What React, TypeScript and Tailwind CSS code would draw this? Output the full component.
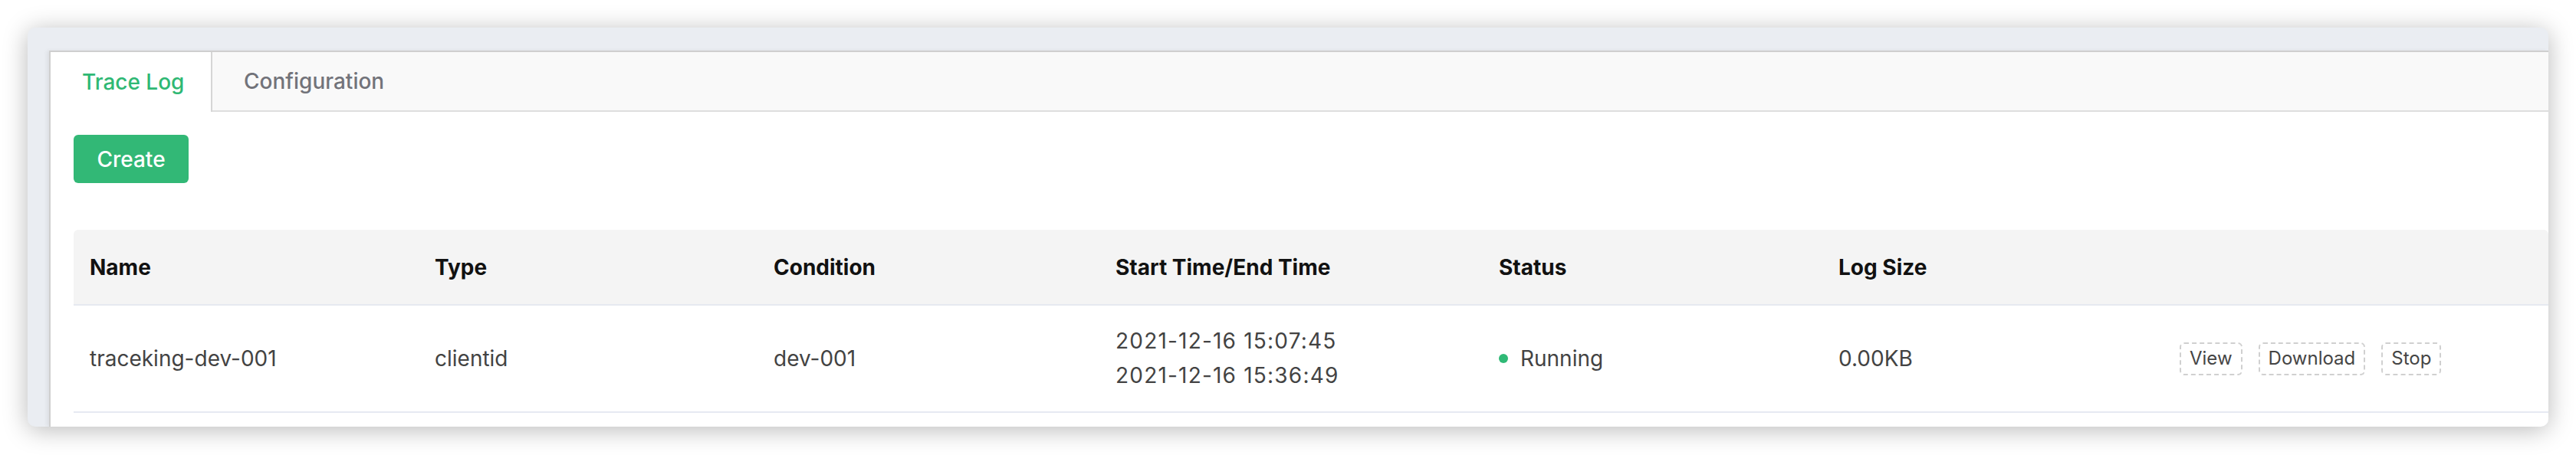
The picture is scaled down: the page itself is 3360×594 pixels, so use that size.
import React from 'react';

const columns = [
  { key: 'name', label: 'Name' },
  { key: 'type', label: 'Type' },
  { key: 'condition', label: 'Condition' },
  { key: 'time', label: 'Start Time/End Time' },
  { key: 'status', label: 'Status' },
  { key: 'size', label: 'Log Size' },
  { key: 'actions', label: '' },
];

const rows = [
  {
    name: 'traceking-dev-001',
    type: 'clientid',
    condition: 'dev-001',
    start: '2021-12-16 15:07:45',
    end: '2021-12-16 15:36:49',
    status: 'Running',
    size: '0.00KB',
  },
];

function ActionButton({ children }: { children: React.ReactNode }) {
  return (
    <button className="h-[43px] px-[11px] border-2 border-dashed border-[#d0d0d0] rounded-[6px] text-[24px] text-[#454545] leading-none bg-white">
      {children}
    </button>
  );
}

export default function App() {
  const gridCols = 'grid grid-cols-[450px_442px_446px_500px_443px_445px_1fr]';

  return (
    <div className="w-[3360px] h-[594px] bg-white pt-[36px] pl-[36px] overflow-hidden font-['Inter',sans-serif]">
      <div className="w-[3288px] h-[521px] bg-[#eaedf2] rounded-[10px] shadow-[0_4px_32px_rgba(0,0,0,0.28)] overflow-hidden pt-[30px] pl-[28px]">
        <div className="h-full bg-white border-l-2 border-t-2 border-[#cfcfcf] shadow-[-3px_0_5px_rgba(0,0,0,0.06)]">
          {/* tabs */}
          <div className="flex h-[78px] bg-[#f9f9f9] border-b-2 border-[#dedede]">
            <div className="w-[211px] h-[78px] bg-white border-r-2 border-[#d6d6d6] flex items-center pl-[41px] text-[28px] font-medium text-[#2fb874]">
              Trace Log
            </div>
            <div className="flex items-center pl-[41px] text-[28px] font-medium text-[#72737a]">
              Configuration
            </div>
          </div>

          <div className="pl-[30px] pt-[30px]">
            <button className="w-[150px] h-[63px] rounded-[6px] bg-[#32b876] text-white text-[28px] font-medium">
              Create
            </button>

            <div className="mt-[61px]">
              <div className={`${gridCols} h-[99px] bg-[#f4f4f4] rounded-t-[6px] border-b-2 border-[#e6e9f0] items-center`}>
                {columns.map((c) => (
                  <div key={c.key} className="pl-[21px] text-[28px] font-bold text-[#111111]">
                    {c.label}
                  </div>
                ))}
              </div>

              {rows.map((r) => (
                <div
                  key={r.name}
                  className={`${gridCols} h-[140px] border-b-2 border-[#e6e9f2] items-center text-[28px] text-[#434343]`}
                >
                  <div className="pl-[21px]">{r.name}</div>
                  <div className="pl-[21px]">{r.type}</div>
                  <div className="pl-[21px]">{r.condition}</div>
                  <div className="pl-[21px] leading-[45px] tracking-[1.2px]">
                    <div>{r.start}</div>
                    <div>{r.end}</div>
                  </div>
                  <div className="pl-[21px] flex items-center gap-[16px]">
                    <span className="w-[12px] h-[12px] rounded-full bg-[#2fb976]" />
                    {r.status}
                  </div>
                  <div className="pl-[21px]">{r.size}</div>
                  <div className="pl-[21px] flex items-center gap-[21px]">
                    <ActionButton>View</ActionButton>
                    <ActionButton>Download</ActionButton>
                    <ActionButton>Stop</ActionButton>
                  </div>
                </div>
              ))}
            </div>
          </div>
        </div>
      </div>
    </div>
  );
}
